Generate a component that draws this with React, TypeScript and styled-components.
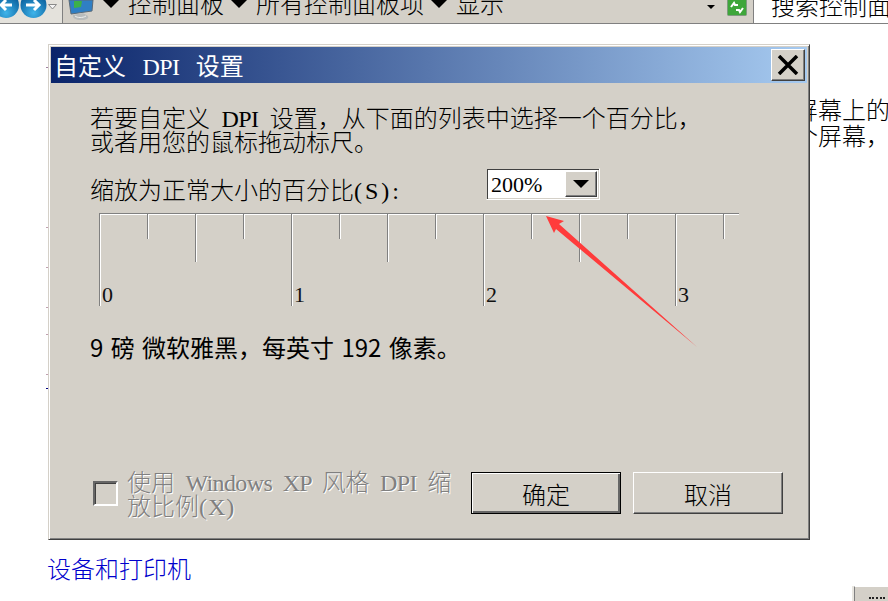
import React from "react";
import styled, { createGlobalStyle } from "styled-components";

const CJK = `"Noto Sans CJK SC", "Liberation Serif", serif`;
const panel = "#d4d0c8";

const GlobalStyle = createGlobalStyle`
  html, body {
    margin: 0;
    padding: 0;
    height: 100%;
    overflow: hidden;
    background: #ffffff;
  }
  #root {
    height: 601px;
    overflow: hidden;
  }
`;

const Screen = styled.div`
  position: relative;
  width: 888px;
  height: 601px;
  overflow: hidden;
  font-family: ${CJK};
  font-size: 24px;
  font-weight: 300;
  color: #000;
`;

/* explorer bar behind the dialog, cut off by the top of the picture */
const AddressBar = styled.div`
  display: flex;
  align-items: flex-start;
  height: 23px;
  background: ${panel};
  border-bottom: 1px solid #808080;
  overflow: hidden;
`;
const NavButtons = styled.svg`
  flex: none;
  display: block;
  width: 62px;
  height: 23px;
  background: #e4e2dc;
`;
const Separator = styled.div`
  flex: none;
  width: 1px;
  height: 23px;
  background: #808080;
  margin-right: 2px;
`;
const MonitorIcon = styled.svg`
  flex: none;
  display: block;
  width: 31px;
  height: 20px;
`;
const Crumbs = styled.div`
  display: flex;
  flex: 1;
  margin-left: 7px;
`;
const CrumbArrow = styled.div`
  flex: none;
  width: 0;
  height: 0;
  margin: 0 9px 0 0;
  border-left: 8px solid transparent;
  border-right: 8px solid transparent;
  border-top: 8px solid #000;
`;
const Crumb = styled.span`
  flex: none;
  margin: -11px 7px 0 0;
  line-height: 28px;
  white-space: nowrap;
`;
const MiniCaret = styled.div`
  flex: none;
  width: 0;
  height: 0;
  margin: 5px 12px 0 0;
  border-left: 4px solid transparent;
  border-right: 4px solid transparent;
  border-top: 4px solid #000;
`;
const RefreshIcon = styled.svg`
  flex: none;
  display: block;
  width: 20px;
  height: 16px;
`;
const SearchBox = styled.div`
  flex: none;
  width: 135px;
  height: 23px;
  margin-left: 6px;
  padding-left: 17px;
  box-sizing: border-box;
  background: #fff;
  border-left: 1px solid #808080;
  box-shadow: -4px 0 0 ${panel};
  line-height: 28px;
  white-space: nowrap;
  overflow: hidden;
`;
const SearchText = styled.span`
  display: block;
  margin-top: -9px;
`;

const PageBody = styled.div`
  display: flex;
  height: 577px;
`;
const MarkRail = styled.div`
  flex: none;
  width: 48px;
  display: flex;
  flex-direction: column;
  align-items: flex-end;
`;
const Mark = styled.div<{ $gap: number; $color: string }>`
  width: 2px;
  height: 1px;
  margin-top: ${(p) => p.$gap}px;
  background: ${(p) => p.$color};
`;
const PageMain = styled.div`
  flex: 1;
  min-width: 0;
  display: flex;
  flex-direction: column;
`;
const PageText = styled.div`
  margin: 72px 0 0 746px;
  line-height: 26px;
  white-space: nowrap;
`;
const DeviceLink = styled.a`
  margin: 406px 0 0 -1px;
  color: #0000cc;
  line-height: 28px;
`;
const CutButton = styled.div`
  align-self: flex-end;
  width: 34px;
  height: 20px;
  margin-top: 4px;
  background: ${panel};
  border-left: 1px solid #808080;
  border-top: 1px solid #fff;
  box-shadow: -2px 0 0 #e8e6e0;
  padding: 10px 0 0 14px;
  box-sizing: border-box;
`;
const CutDash = styled.div`
  width: 16px;
  border-top: 2px dotted #222;
`;

/* the dialog window floats over the page */
const Dialog = styled.div`
  position: absolute;
  left: 48px;
  top: 44px;
  width: 762px;
  height: 496px;
  box-sizing: border-box;
  display: flex;
  flex-direction: column;
  background: ${panel};
  border-top: 1px solid ${panel};
  border-left: 1px solid ${panel};
  border-right: 1px solid #404040;
  border-bottom: 1px solid #404040;
  box-shadow: inset 1px 1px 0 #fff, inset -1px -1px 0 #808080;
  padding: 2px;
`;
const TitleBar = styled.div`
  flex: none;
  height: 36px;
  display: flex;
  align-items: center;
  justify-content: space-between;
  padding: 0 2px 0 3px;
  background: linear-gradient(to right, #0a246a, #a6caf0);
  color: #fff;
  font-weight: 400;
`;
const TitleText = styled.span`
  line-height: 36px;
  white-space: pre;
`;
const Latin = styled.span<{ $track?: number; $word?: number }>`
  font-family: "Liberation Serif", serif;
  font-size: 24px;
  font-weight: 400;
  line-height: 0;
  white-space: pre;
  word-spacing: ${(p) => p.$word ?? 5}px;
  letter-spacing: ${(p) => p.$track ?? 0}px;
`;
const CloseButton = styled.button`
  width: 34px;
  height: 32px;
  padding: 0;
  display: flex;
  align-items: center;
  justify-content: center;
  background: ${panel};
  border: 0;
  border-top: 1px solid #fff;
  border-left: 1px solid #fff;
  border-right: 1px solid #404040;
  border-bottom: 1px solid #404040;
  box-shadow: inset -1px -1px 0 #808080;
`;
const DialogBody = styled.div`
  flex: 1;
  display: flex;
  flex-direction: column;
  padding: 22px 24px 0 39px;
  min-height: 0;
`;
const Intro = styled.div`
  line-height: 24px;
  white-space: pre;
`;
const ScaleRow = styled.div`
  display: flex;
  align-items: flex-start;
  justify-content: space-between;
  width: 510px;
  margin-top: 15px;
  white-space: pre;
`;
const ScaleLabel = styled.span`
  margin-top: 10px;
  line-height: 22px;
`;
const Combo = styled.div`
  display: flex;
  flex: none;
  width: 114px;
  height: 32px;
  box-sizing: border-box;
  background: #fff;
  border: 1px solid;
  border-color: ${panel} #fff #fff ${panel};
  box-shadow: inset 1px 1px 0 #404040, inset -1px -1px 0 ${panel};
  padding: 2px;
`;
const ComboValue = styled.div`
  flex: 1;
  padding-left: 2px;
  font-family: "Liberation Serif", serif;
  font-size: 22px;
  font-weight: 400;
  line-height: 27px;
`;
const ComboButton = styled.div`
  flex: none;
  width: 32px;
  display: flex;
  align-items: center;
  justify-content: center;
  box-sizing: border-box;
  background: ${panel};
  border: 1px solid;
  border-color: #fff #404040 #404040 #fff;
  box-shadow: inset -1px -1px 0 #808080;
`;
const ComboCaret = styled.div`
  width: 0;
  height: 0;
  border-left: 8px solid transparent;
  border-right: 8px solid transparent;
  border-top: 8px solid #000;
`;
const Ruler = styled.div`
  display: flex;
  flex: none;
  width: 640px;
  margin: 13px 0 0 9px;
  border-top: 1px solid #808080;
  box-shadow: inset 0 1px 0 #fff;
  height: 92px;
`;
const Tick = styled.div<{ $height: number }>`
  flex: none;
  box-sizing: border-box;
  width: 48px;
  height: ${(p) => p.$height}px;
  border-left: 1px solid #808080;
  box-shadow: inset 1px 0 0 #fff;
  position: relative;
`;
const TickLabel = styled.span`
  position: absolute;
  left: 2px;
  bottom: -1px;
  font-family: "Liberation Serif", serif;
  font-size: 22px;
  font-weight: 400;
  line-height: 24px;
  color: #111;
`;
const FontInfo = styled.div`
  margin-top: 26px;
  font-weight: 400;
  line-height: 30px;
  white-space: pre;
  word-spacing: 2px;
`;
const BottomRow = styled.div`
  margin-top: auto;
  margin-bottom: 20px;
  display: flex;
  align-items: center;
  margin-left: 3px;
`;
const CheckBox = styled.div`
  flex: none;
  width: 25px;
  height: 25px;
  box-sizing: border-box;
  background: ${panel};
  border: 2px solid;
  border-color: #666 #fff #fff #666;
  box-shadow: inset 1px 1px 0 #404040;
`;
const CheckLabel = styled.div`
  flex: none;
  width: 344px;
  margin-left: 9px;
  color: #808080;
  text-shadow: 1px 1px 0 #fff;
  line-height: 24px;
  white-space: pre-wrap;
`;
const PushButton = styled.button<{ $primary?: boolean }>`
  flex: none;
  width: 150px;
  height: 42px;
  margin-left: ${(p) => (p.$primary ? "0" : "12px")};
  padding: 0;
  background: ${panel};
  font: inherit;
  color: #000;
  border: 1px solid;
  border-color: ${(p) => (p.$primary ? "#000" : "#fff #404040 #404040 #fff")};
  box-shadow: ${(p) =>
    p.$primary
      ? "inset 1px 1px 0 #fff, inset -2px -2px 0 #666"
      : "inset -1px -1px 0 #808080"};
`;
const ArrowOverlay = styled.svg`
  position: absolute;
  left: 0;
  top: 0;
  width: 888px;
  height: 601px;
  pointer-events: none;
`;

const ticks = Array.from({ length: 14 }, (_, i) => ({
  height: i % 4 === 0 ? 92 : i % 2 === 0 ? 48 : 25,
  label: i % 4 === 0 ? String(i / 4) : null,
}));

const pageMarks = [
  { gap: 43, color: "#a080a0" },
  { gap: 159, color: "#c0a0b0" },
  { gap: 39, color: "#c0a0b0" },
  { gap: 39, color: "#c0a0b0" },
  { gap: 26, color: "#c0a0b0" },
  { gap: 39, color: "#c0a0b0" },
  { gap: 13, color: "#000080" },
];

export default function App() {
  return (
    <Screen>
      <GlobalStyle />
      <AddressBar>
        <NavButtons viewBox="0 0 62 23">
          <defs>
            <radialGradient id="orb" cx="50%" cy="80%" r="70%">
              <stop offset="0%" stopColor="#3fb4ea" />
              <stop offset="100%" stopColor="#0a5f9c" />
            </radialGradient>
          </defs>
          <circle cx="6" cy="5" r="13" fill="url(#orb)" />
          <circle cx="33.5" cy="5" r="13" fill="url(#orb)" />
          <path d="M12 5H2M6 0L1 5l5 5" fill="none" stroke="#fff" strokeWidth="3" />
          <path d="M26 5h13M34 0l5 5-5 5" fill="none" stroke="#fff" strokeWidth="3" />
          <path d="M48.500 4.500h8l-4 4.500z" fill="#f4f4f4" stroke="#8a8a8a" />
        </NavButtons>
        <Separator />
        <MonitorIcon viewBox="0 0 31 20">
          <path d="M4 0h24l-1 11L6 14z" fill="#2f7fc4" stroke="#5a6a78" />
          <path d="M9 1h8l-1 6-7 1z" fill="#3cb04a" />
          <path d="M8 15l10-2 5 3c1 2-1 4-7 4-5 0-9-2-8-5z" fill="#b9bcbc" />
          <path d="M10 16c2 2 8 2 11 0" fill="none" stroke="#eef0f0" />
        </MonitorIcon>
        <Crumbs>
          <CrumbArrow />
          <Crumb>控制面板</Crumb>
          <CrumbArrow />
          <Crumb>所有控制面板项</Crumb>
          <CrumbArrow />
          <Crumb>显示</Crumb>
        </Crumbs>
        <MiniCaret />
        <RefreshIcon viewBox="0 0 20 16">
          <rect x="0.500" y="-2" width="19" height="17.500" rx="1" fill="#3ea63a" stroke="#7f9a7f" />
          <path d="M4 7l3-4 1 2h3M16 8l-3 4-1-2H9" fill="none" stroke="#fff" strokeWidth="2" />
        </RefreshIcon>
        <SearchBox>
          <SearchText>搜索控制面板</SearchText>
        </SearchBox>
      </AddressBar>

      <PageBody>
        <MarkRail>
          {pageMarks.map((m, i) => (
            <Mark key={i} $gap={m.gap} $color={m.color} />
          ))}
        </MarkRail>
        <PageMain>
          <PageText>
            屏幕上的
            <br />
            个屏幕，
          </PageText>
          <DeviceLink>设备和打印机</DeviceLink>
          <CutButton>
            <CutDash />
          </CutButton>
        </PageMain>
      </PageBody>

      <Dialog>
        <TitleBar>
          <TitleText>
            自定义<Latin $track={-0.6} $word={11}> DPI </Latin>设置
          </TitleText>
          <CloseButton>
            <svg width="22" height="20" viewBox="0 0 22 20">
              <path d="M2 1l18 18M20 1L2 19" stroke="#000" strokeWidth="3.500" fill="none" />
            </svg>
          </CloseButton>
        </TitleBar>
        <DialogBody>
          <Intro>
            若要自定义<Latin $track={-0.6} $word={6}> DPI </Latin>设置，从下面的列表中选择一个百分比，
            <br />
            或者用您的鼠标拖动标尺。
          </Intro>
          <ScaleRow>
            <ScaleLabel>
              缩放为正常大小的百分比<Latin $track={3}>(S):</Latin>
            </ScaleLabel>
            <Combo>
              <ComboValue>200%</ComboValue>
              <ComboButton>
                <ComboCaret />
              </ComboButton>
            </Combo>
          </ScaleRow>
          <Ruler>
            {ticks.map((t, i) => (
              <Tick key={i} $height={t.height}>
                {t.label && <TickLabel>{t.label}</TickLabel>}
              </Tick>
            ))}
          </Ruler>
          <FontInfo>9 磅 微软雅黑，每英寸 192 像素。</FontInfo>
          <BottomRow>
            <CheckBox />
            <CheckLabel>
              使用<Latin $track={-0.6}> Windows XP </Latin>风格<Latin $track={-0.6}> DPI </Latin>缩
              <br />
              放比例<Latin $track={1}>(X)</Latin>
            </CheckLabel>
            <PushButton $primary>确定</PushButton>
            <PushButton>取消</PushButton>
          </BottomRow>
        </DialogBody>
      </Dialog>

      <ArrowOverlay viewBox="0 0 888 601">
        <polygon points="546,216 564,221 559,224 697,347 556,229 554,233" fill="#ff3b3b" />
      </ArrowOverlay>
    </Screen>
  );
}
